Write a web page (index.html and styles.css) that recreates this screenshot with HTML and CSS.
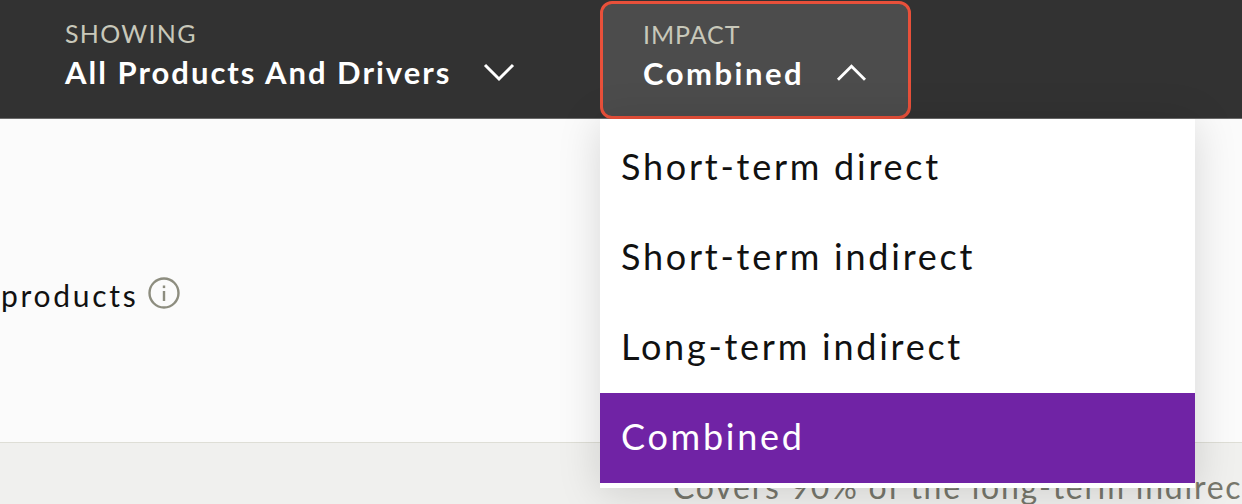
FILE: index.html
```html
<!DOCTYPE html>
<html lang="en">
<head>
    <meta charset="UTF-8">
    <meta name="viewport" content="width=device-width, initial-scale=1.0">
    <title>Impact filter</title>
    <link rel="stylesheet" href="styles.css">
</head>
<body>
    <header class="topbar">
        <div class="filter filter-showing">
            <span class="filter-label">SHOWING</span>
            <span class="filter-value">All Products And Drivers
                <svg class="chevron" width="32" height="20" viewBox="0 0 32 20"><path d="M2 3 L16 17 L30 3" fill="none" stroke="#fff" stroke-width="3"/></svg>
            </span>
        </div>
        <div class="filter filter-impact">
            <span class="filter-label">IMPACT</span>
            <span class="filter-value">Combined
                <svg class="chevron" width="32" height="20" viewBox="0 0 32 20"><path d="M2 17 L16 3 L30 17" fill="none" stroke="#fff" stroke-width="3"/></svg>
            </span>
        </div>
    </header>

    <main class="content">
        <div class="content-row">
            <span>products</span>
            <svg class="info" width="32" height="32" viewBox="0 0 32 32">
                <circle cx="16" cy="16" r="14.5" fill="none" stroke="#8d8d7f" stroke-width="2.4"/>
                <rect x="14.8" y="14" width="2.4" height="10" fill="#8d8d7f"/>
                <rect x="14.8" y="8.5" width="2.4" height="2.6" fill="#8d8d7f"/>
            </svg>
        </div>
    </main>

    <footer class="notes">
        <p class="note">Covers 90% of the long-term indirect</p>
    </footer>

    <ul class="menu">
        <li class="menu-item">Short-term direct</li>
        <li class="menu-item">Short-term indirect</li>
        <li class="menu-item">Long-term indirect</li>
        <li class="menu-item selected">Combined</li>
    </ul>
</body>
</html>
```

FILE: styles.css
```css
* {
    margin: 0;
    padding: 0;
    box-sizing: border-box;
}

html, body {
    height: 504px;
    overflow: hidden;
}

body {
    font-family: Lato, "Open Sans", sans-serif;
    background: #fbfbfb;
    color: #111;
    display: flex;
    flex-direction: column;
}

.topbar {
    height: 119px;
    background: #323232;
    border-bottom: 1px solid #6a6a6a;
    display: flex;
    padding-left: 22px;
    gap: 43px;
    flex-shrink: 0;
}

.filter {
    display: flex;
    flex-direction: column;
    padding: 18px 41px 0 43px;
    height: 118px;
}

.filter-showing {
    width: 535px;
}

.filter-impact {
    width: 311px;
    margin-top: 1px;
    height: 118px;
    padding-top: 15px;
    background: #4c4c4c;
    border: 3px solid #e8503a;
    border-radius: 12px;
    padding-left: 40px;
}

.filter-label {
    color: #c8c8ba;
    font-size: 25px;
    line-height: 30px;
    letter-spacing: 1.3px;
}

.filter-impact .filter-label {
    letter-spacing: 0.9px;
}

.filter-value {
    color: #fff;
    font-size: 31px;
    font-weight: 700;
    line-height: 40px;
    margin-top: 4px;
    letter-spacing: 2px;
    white-space: nowrap;
    display: flex;
    align-items: center;
    gap: 32px;
}

.filter-impact .filter-value {
    letter-spacing: 2.5px;
}

.content {
    flex: 1;
    padding: 156px 0 0 1px;
}

.content-row {
    display: flex;
    align-items: center;
    gap: 10px;
    font-size: 30px;
    letter-spacing: 2.7px;
    line-height: 40px;
}

.info {
    margin-bottom: 4px;
}

.notes {
    height: 62px;
    background: #f0f0ee;
    border-top: 1px solid #deded6;
    padding: 26px 0 0 673px;
    flex-shrink: 0;
}

.note {
    color: #77776c;
    font-size: 32px;
    letter-spacing: 1.75px;
    line-height: 36px;
    white-space: nowrap;
}

.menu {
    position: absolute;
    left: 600px;
    top: 119px;
    width: 595px;
    height: 369px;
    padding-top: 4px;
    background: #fff;
    list-style: none;
    box-shadow: 0 4px 40px rgba(0, 0, 0, 0.15);
}

.menu-item {
    height: 90px;
    padding-left: 21px;
    font-size: 36px;
    line-height: 86px;
    letter-spacing: 2.75px;
    color: #111;
}

.menu-item.selected {
    background: #7023a5;
    color: #fff;
}
```
